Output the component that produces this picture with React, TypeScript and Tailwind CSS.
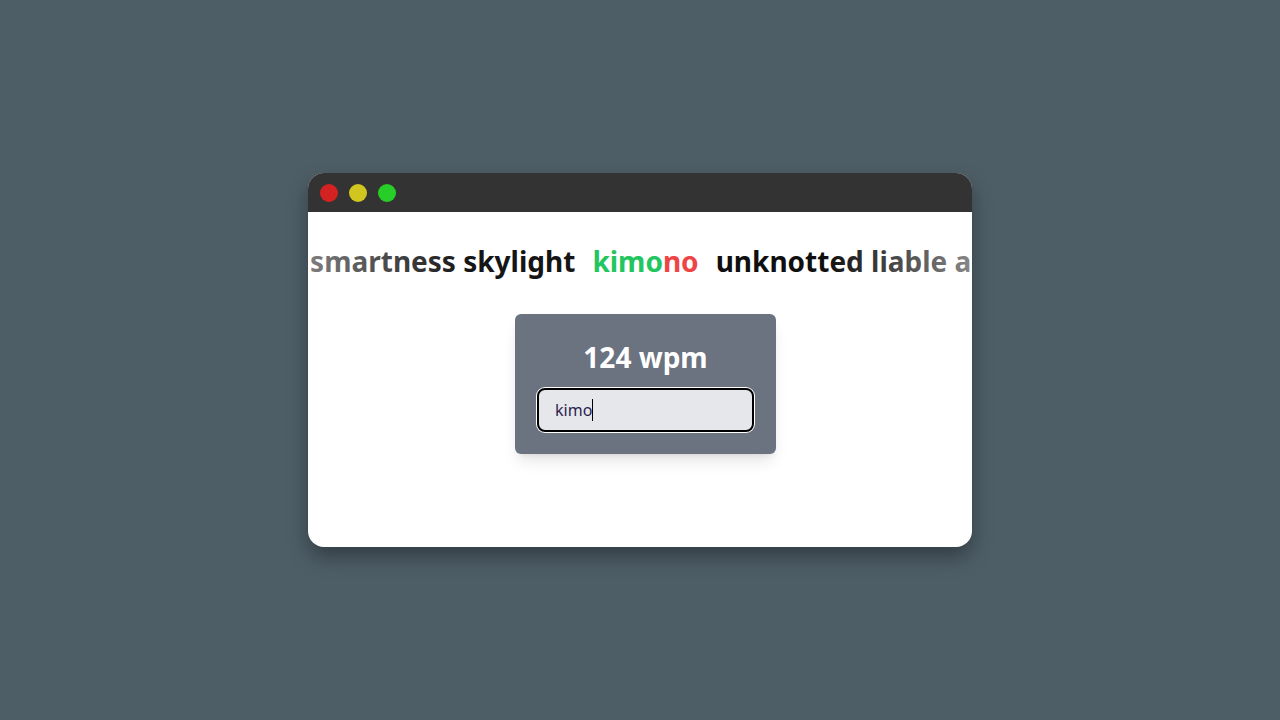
const font = { fontFamily: '"Noto Sans", "Open Sans", sans-serif' };

const Dot = ({ color }: { color: string }) => (
    <span className={`block w-[18px] h-[18px] rounded-full ${color}`} />
);

export default function App() {
    return (
        <div className="h-screen w-full flex items-center justify-center bg-[#4e5e67]" style={font}>
            <div className="w-[664px] h-[374px] bg-white rounded-2xl overflow-hidden shadow-[0_10px_20px_rgba(0,0,0,0.35)] flex flex-col">
                <div className="h-[39px] bg-[#333333] flex items-center gap-[11px] pl-[12px]">
                    <Dot color="bg-[#d42222]" />
                    <Dot color="bg-[#d1c51f]" />
                    <Dot color="bg-[#27ce27]" />
                </div>

                <div className="relative mt-[31px] pl-[11px] grid grid-cols-[1fr_auto_1fr] text-[28px] font-bold leading-9 whitespace-nowrap">
                    <div className="-ml-[11px] overflow-hidden flex justify-end text-[#151515]">
                        <span>smartness skylight</span>
                    </div>
                    <div className="px-[17px]">
                        <span className="text-[#22c55e]">kimo</span>
                        <span className="text-[#ef4444]">no</span>
                    </div>
                    <div className="overflow-hidden flex justify-start text-[#0f0f0f]">
                        <span>unknotted liable arbitrary swimming</span>
                    </div>
                    <div className="pointer-events-none absolute inset-0 bg-[linear-gradient(to_right,rgba(255,255,255,0.45),rgba(255,255,255,0)_24%,rgba(255,255,255,0)_78%,rgba(255,255,255,0.5))]" />
                </div>

                <div className="flex justify-center mt-[35px] pl-[11px]">
                    <div className="w-[261px] bg-[#6b7280] rounded-md shadow-lg px-[22px] pt-[25px] pb-[22px] flex flex-col items-center">
                        <div className="text-[28px] font-bold leading-9 text-white">124 wpm</div>
                        <div className="mt-[13px] w-full h-11 bg-[#e5e7eb] border-2 border-black ring-1 ring-white rounded-lg flex items-center pl-4 text-[16px] text-[#2b1e50]">
                            <span>kimo</span>
                            <span className="inline-block w-px h-[22px] bg-black" />
                        </div>
                    </div>
                </div>
            </div>
        </div>
    );
}
